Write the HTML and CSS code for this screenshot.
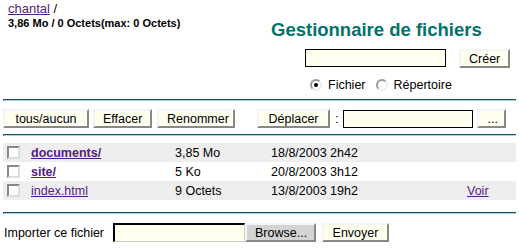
FILE: index.html
```html
<!DOCTYPE html>
<html lang="fr">
<head>
    <meta charset="UTF-8">
    <title>Gestionnaire de fichiers</title>
    <link rel="stylesheet" href="styles.css">
</head>
<body>
    <div class="header">
        <div class="where">
            <div class="path"><a href="#">chantal</a> /</div>
            <div class="usage">3,86 Mo / 0 Octets(max: 0 Octets)</div>
        </div>
        <div class="create">
            <h1>Gestionnaire de fichiers</h1>
            <div class="create-row">
                <input type="text" class="field field-create">
                <button class="btn">Créer</button>
            </div>
            <div class="kind">
                <label><input type="radio" name="kind" checked> Fichier</label>
                <label><input type="radio" name="kind"> Répertoire</label>
            </div>
        </div>
    </div>

    <hr class="rule">

    <div class="actions">
        <button class="btn btn-all">tous/aucun</button>
        <button class="btn btn-del">Effacer</button>
        <button class="btn btn-ren">Renommer</button>
        <button class="btn btn-move">Déplacer</button>
        <span class="colon">:</span>
        <input type="text" class="field field-move">
        <button class="btn btn-dots">...</button>
    </div>

    <hr class="rule">

    <div class="files">
        <div class="file odd">
            <input type="checkbox" class="check">
            <a href="#" class="name dir">documents/</a>
            <span>3,85 Mo</span>
            <span>18/8/2003 2h42</span>
            <span></span>
        </div>
        <div class="file">
            <input type="checkbox" class="check">
            <a href="#" class="name dir">site/</a>
            <span>5 Ko</span>
            <span>20/8/2003 3h12</span>
            <span></span>
        </div>
        <div class="file odd">
            <input type="checkbox" class="check">
            <a href="#" class="name">index.html</a>
            <span>9 Octets</span>
            <span>13/8/2003 19h2</span>
            <a href="#" class="view">Voir</a>
        </div>
    </div>

    <hr class="rule rule-low">

    <div class="upload">
        <span class="upload-label">Importer ce fichier</span>
        <input type="text" class="field field-upload">
        <button class="btn btn-browse">Browse...</button>
        <button class="btn btn-send">Envoyer</button>
    </div>
</body>
</html>
```

FILE: styles.css
```css
body {
    font-family: "Liberation Sans", Arial, sans-serif;
    font-size: 12.5px;
    margin: 0;
    padding: 1px 3px;
    background: white;
    color: black;
}
a {
    color: #551a8b;
}
.header {
    display: flex;
    justify-content: space-between;
}
.where {
    padding-left: 5px;
}
.path {
    font-size: 13px;
    line-height: 16px;
}
.usage {
    font-size: 11px;
    font-weight: bold;
    line-height: 12px;
}
.create {
    width: 250px;
}
h1 {
    font-size: 18.5px;
    color: #00736b;
    margin: 18px 0 0 5px;
    line-height: 22px;
}
.create-row {
    display: flex;
    margin: 8px 0 0 39px;
    gap: 13px;
}
.kind {
    margin: 9px 0 0 44px;
    display: flex;
    gap: 10px;
    line-height: 16px;
}
.kind label {
    display: flex;
    align-items: center;
    gap: 6px;
}
.kind input {
    appearance: none;
    width: 12px;
    height: 12px;
    margin: 0;
    border-radius: 50%;
    border: 2px solid;
    border-color: #999 #eee #eee #999;
    background: white;
    position: relative;
}
.kind input:checked::after {
    content: "";
    position: absolute;
    left: 2px;
    top: 2px;
    width: 4px;
    height: 4px;
    border-radius: 50%;
    background: black;
}
.rule {
    height: 0;
    margin: 6px 0 0;
    border: none;
    border-top: 1px solid #1b5267;
    border-bottom: 1px solid #a9d2da;
    border-left: 1px solid #1b5267;
}
.rule-low {
    margin-top: 12px;
}
.btn {
    font-family: inherit;
    font-size: 12.5px;
    background: #fffff0;
    color: black;
    height: 19px;
    padding: 0 8px;
    margin: 0;
    border: 2px solid;
    border-color: #f4f4f4 #888 #888 #f4f4f4;
    line-height: 14px;
}
.field {
    background: #ffffee;
    border: 1px solid black;
    height: 18px;
    box-sizing: border-box;
    margin: 0;
    padding: 0 2px;
}
.field-create {
    width: 141px;
}
.actions {
    display: flex;
    align-items: center;
    margin-top: 8px;
}
.btn-all {
    width: 86px;
}
.btn-del {
    width: 59px;
    margin-left: 4px;
}
.btn-ren {
    width: 78px;
    margin-left: 5px;
}
.btn-move {
    width: 73px;
    margin-left: 22px;
}
.colon {
    margin: 0 5px;
}
.field-move {
    width: 130px;
}
.btn-dots {
    width: 29px;
    margin-left: 4px;
}
.files {
    margin-top: 7px;
}
.file {
    display: grid;
    grid-template-columns: 28px 144px 96px 196px 1fr;
    align-items: center;
    height: 19px;
}
.file.odd {
    background: #eeeeee;
}
.check {
    appearance: none;
    width: 13px;
    height: 13px;
    margin: 0 0 0 4px;
    box-sizing: border-box;
    border: 2px solid;
    border-color: #888 #ddd #ddd #888;
    background: white;
}
.name.dir {
    font-weight: bold;
}
.upload {
    display: flex;
    align-items: center;
    margin-top: 9px;
    padding-left: 1px;
}
.upload-label {
    width: 109px;
}
.field-upload {
    width: 132px;
    height: 19px;
    border-width: 2px 1px 1px 2px;
    border-color: black #ccc #ccc black;
}
.btn-browse {
    background: #d4d4d4;
    width: 71px;
}
.btn-send {
    width: 67px;
    margin-left: 6px;
}
```
